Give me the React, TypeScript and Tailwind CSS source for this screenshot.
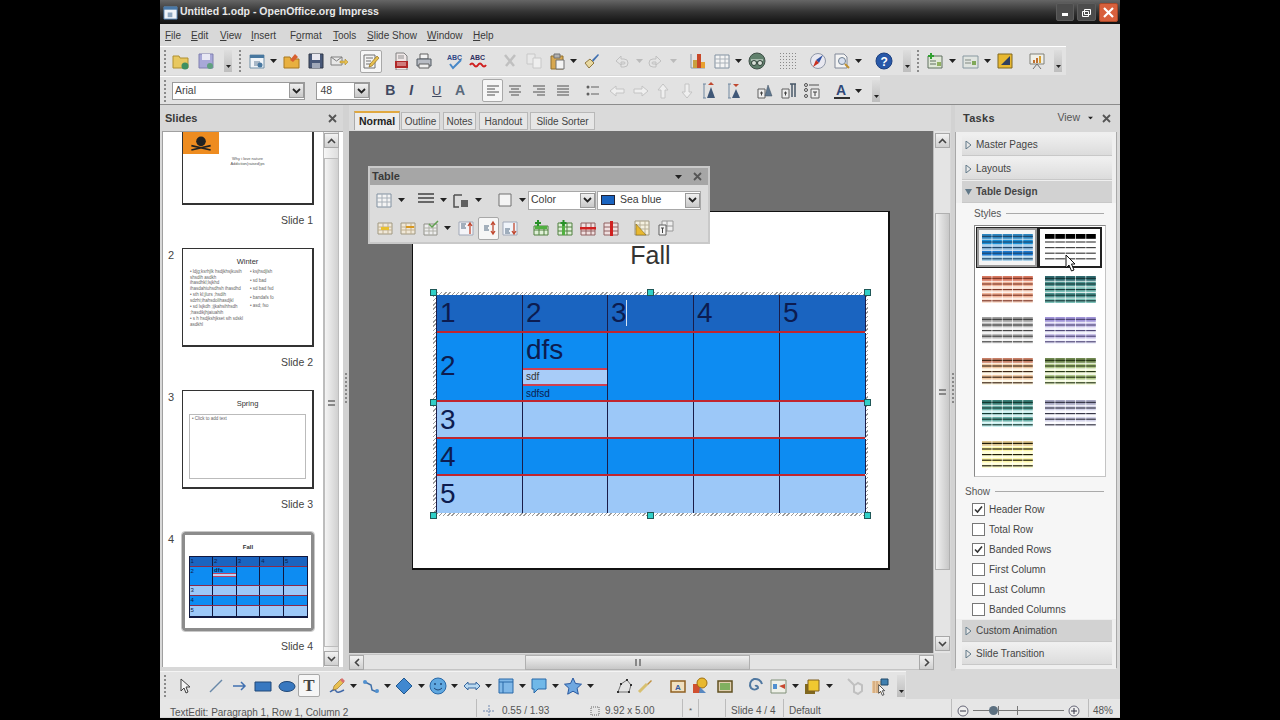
import type { ReactNode } from 'react';

const G = (p: { c: ReactNode }) => p.c;

const icons: Record<string, ReactNode> = {
  folderNew: <><path d="M1 4h6l1 2h8v10H1z" fill="#e8c860" stroke="#b09030" /><circle cx="13" cy="14" r="3.5" fill="#409060" /></>,
  saveAs: <><path d="M2 2h14v14H2z" fill="#a8a8d8" stroke="#8080b0" /><path d="M5 2h8v6H5z" fill="#e8e8f4" /><circle cx="13" cy="14" r="3" fill="#60a080" /></>,
  doc: <><path d="M2 3h14v13H2z" fill="#f0f4f8" stroke="#7090a8" /><path d="M2 3h14v3H2z" fill="#4878a0" /><path d="M6 9h6v5H6z" fill="#a8b8c8" /><circle cx="12" cy="13" r="2.5" fill="#4878a0" /></>,
  open: <><path d="M1 5h6l1 2h8v9H1z" fill="#e8b040" stroke="#a87820" /><path d="M7 8l5-6 3 3-5 5z" fill="#d86030" /></>,
  save: <><path d="M2 2h14v14H2z" fill="#485878" stroke="#303848" /><path d="M5 2h8v6H5z" fill="#e8e8f0" /><path d="M5 11h8v5H5z" fill="#a0a8b8" /></>,
  mail: <><path d="M1 5h11v8H1z" fill="#e8e8e8" stroke="#808080" /><path d="M1 5l5.500 4L12 5" fill="none" stroke="#808080" /><path d="M10 9h5V7l3 3-3 3v-2h-5z" fill="#e8c050" stroke="#a08020" strokeWidth=".5" /></>,
  edit: <><path d="M2 3h11v13H2z" fill="#f4f4f4" stroke="#707070" /><path d="M4 6h7M4 9h5M4 12h5" stroke="#707070" /><path d="M8 12l7-8 2 2-7 8-3 1z" fill="#e8c050" stroke="#806010" strokeWidth=".6" /></>,
  pdf: <><path d="M4 1h8l3 3v14H4z" fill="#f0e8e8" stroke="#808080" /><path d="M6 4h6M6 6h6" stroke="#909090" /><path d="M3 9h13v7H3z" fill="#b02828" /><path d="M5 11h9M5 13h9" stroke="#f0d0d0" /></>,
  print: <><path d="M5 2h8v5H5z" fill="#f4f4f4" stroke="#606060" /><path d="M2 7h14v7H2z" fill="#b8bcc4" stroke="#505860" /><path d="M4 12h10v4H4z" fill="#f0f0f0" stroke="#606060" /></>,
  spell: <><text x="1" y="8" fontSize="7" fontWeight="700" fill="#304888" fontFamily="Liberation Sans">ABC</text><path d="M4 12l3 4 8-8" fill="none" stroke="#4888c8" strokeWidth="2" /></>,
  auto: <><text x="1" y="8" fontSize="7" fontWeight="700" fill="#303060" fontFamily="Liberation Sans">ABC</text><path d="M1 13q2-3 4 0t4 0 4 0 4 0" fill="none" stroke="#d02020" strokeWidth="2" /></>,
  cut: <path d="M4 3l9 11M14 3L5 14" stroke="#c0c0c0" strokeWidth="2.500" />,
  copy: <><path d="M2 2h8v10H2z" fill="#e8e8e8" stroke="#c8c8c8" /><path d="M8 6h8v10H8z" fill="#eee" stroke="#c8c8c8" /></>,
  paste: <><path d="M3 4h12v13H3z" fill="#d8a850" stroke="#907030" /><path d="M6 2h6v4H6z" fill="#b0b0b0" stroke="#707070" /><path d="M8 8h8v9H8z" fill="#f4f4f4" stroke="#707070" /></>,
  brush: <><path d="M10 8l6-6 1 1-6 7z" fill="#4070b0" /><path d="M3 11l5-4 4 4-5 5z" fill="#e8d8a0" stroke="#907840" /></>,
  undo: <path d="M5 9l5-5v3h3a4 4 0 0 1 0 8h-3v-3h3a1 1 0 0 0 0-2h-3v3z" fill="#e4e4e4" stroke="#c0c0c0" />,
  redo: <path d="M13 9L8 4v3H5a4 4 0 0 0 0 8h3v-3H5a1 1 0 0 1 0-2h3v3z" fill="#e4e4e4" stroke="#c0c0c0" />,
  chart: <><path d="M2 2v14h14" fill="none" stroke="#8898a8" /><path d="M4 8h4v8H4z" fill="#c8a040" /><path d="M8 2h4v14H8z" fill="#c84828" /><path d="M12 10h4v6h-4z" fill="#e8a030" /></>,
  table: <><path d="M2 3h14v13H2z" fill="#f4f4f4" stroke="#8090a0" /><path d="M2 7h14M2 11h14M7 3v13M12 3v13" stroke="#a8b0b8" /></>,
  nav: <><circle cx="9" cy="9" r="8" fill="#60806c" stroke="#405048" /><path d="M3 8h12" stroke="#c0d0c4" strokeWidth="1.500" /><circle cx="6" cy="11" r="2.500" fill="#d8e0d8" stroke="#304038" /><circle cx="12" cy="11" r="2.500" fill="#d8e0d8" stroke="#304038" /></>,
  grid: <path d="M1 1.500h16M1 4.500h16M1 7.500h16M1 10.500h16M1 13.500h16M1 16.500h16" stroke="#8a8a8a" strokeDasharray="1 2" />,
  compass: <><circle cx="9" cy="9" r="7.500" fill="#e8e8f0" stroke="#9098a8" /><path d="M14 3l-4 8-3-3z" fill="#3050a0" /><path d="M4 15l3-7 3 3z" fill="#c83020" /></>,
  find: <><path d="M2 2h9l3 3v11H2z" fill="#f4f4f4" stroke="#808898" /><circle cx="9" cy="9" r="3.500" fill="#d8e0f0" stroke="#708090" /><path d="M12 12l4 4" stroke="#c09030" strokeWidth="2" /></>,
  help: <><circle cx="9" cy="9" r="8" fill="#2858a8" stroke="#1c4080" /><text x="5.500" y="13.500" fontSize="12" fontWeight="700" fill="#fff" fontFamily="Liberation Sans">?</text></>,
  slideNew: <><path d="M2 4h14v12H2z" fill="#e0e8d8" stroke="#607060" /><path d="M4 9h6M4 12h6" stroke="#607060" /><path d="M11 10h4v4h-4z" fill="#90b060" /><path d="M5 1v6M2 4h6" stroke="#30a030" strokeWidth="2" /></>,
  layout: <><path d="M2 4h15v12H2z" fill="#e0e4e0" stroke="#8898a0" /><path d="M4 8h6M4 11h6" stroke="#808880" /><path d="M11 9h4v4h-4z" fill="#80a858" /></>,
  design: <><path d="M2 2h14v14H2z" fill="#e8b830" stroke="#806820" /><path d="M5 13L14 4v9z" fill="#304060" /></>,
  present: <><path d="M2 2h14v10H2z" fill="#f0f0e8" stroke="#808078" /><path d="M5 8h2v3H5zM8 6h2v5H8z" fill="#c07030" /><path d="M11 4h2v7h-2z" fill="#d8a030" /><path d="M9 12l-4 5M9 12l4 5" stroke="#707070" /></>,
  left: <path d="M3 4h12M3 7h8M3 10h12M3 13h8" stroke="#505050" />,
  center: <path d="M3 4h12M5 7h8M3 10h12M5 13h8" stroke="#505050" />,
  right: <path d="M3 4h12M7 7h8M3 10h12M7 13h8" stroke="#505050" />,
  justify: <path d="M3 4h12M3 7h12M3 10h12M3 13h12" stroke="#505050" />,
  bullets: <><circle cx="4" cy="5" r="1.500" fill="#606060" /><circle cx="4" cy="12" r="1.500" fill="#606060" /><path d="M7 5h8M7 12h8" stroke="#606060" /></>,
  aLeft: <path d="M2 9l6-5v3h8v4H8v3z" fill="#efefef" stroke="#c4c4c4" />,
  aRight: <path d="M16 9l-6-5v3H2v4h8v3z" fill="#efefef" stroke="#c4c4c4" />,
  aUp: <path d="M9 2l5 6h-3v8H7V8H4z" fill="#efefef" stroke="#c4c4c4" />,
  aDown: <path d="M9 16l5-6h-3V2H7v8H4z" fill="#efefef" stroke="#c4c4c4" />,
  spaceUp: <><path d="M3 2v14M2 2h3M2 16h3" stroke="#7088a0" /><path d="M6 16l4-11 4 11z" fill="#405878" /><path d="M10 0l3 3h-6z" fill="#c04830" /></>,
  spaceDown: <><path d="M3 2v14M2 2h3M2 16h3" stroke="#7088a0" /><path d="M6 16l4-9 4 9z" fill="#405878" /><path d="M10 5l3-3H7z" fill="#c04830" /></>,
  charBox: <><path d="M2 7h7v9H2z" fill="#eee" stroke="#606060" /><path d="M4 11h3M5.500 9.500v4" stroke="#404040" /><path d="M9 14l3-11 4 11z" fill="#607890" stroke="#405060" strokeWidth=".5" /></>,
  paraBox: <><path d="M2 7h7v9H2z" fill="#eee" stroke="#606060" /><path d="M4 11h3M5.500 9.500v4" stroke="#404040" /><path d="M10 2h6M12 2v13M15 2v13" stroke="#485868" strokeWidth="1.500" /></>,
  numBox: <><circle cx="3" cy="3" r="1.500" fill="none" stroke="#505050" /><circle cx="3" cy="8" r="1.500" fill="none" stroke="#505050" /><circle cx="3" cy="14" r="1.500" fill="none" stroke="#505050" /><path d="M6 3h10" stroke="#505050" /><path d="M8 7h8v9H8z" fill="#eee" stroke="#606060" /><path d="M10 10h4M12 10v4" stroke="#404040" /></>,
  fontColor: <><text x="3" y="13" fontSize="14" fontWeight="700" fill="#304878" fontFamily="Liberation Sans">A</text><path d="M1 15h16v2H1z" fill="#303030" /></>,
  lines: <path d="M1 3h16M1 7h16M1 11h16" stroke="#404040" strokeWidth="1.600" />,
  borderBox: <><path d="M2 4h8M2 4v12h5" fill="none" stroke="#505050" strokeWidth="1.500" /><path d="M9 9h7v7H9z" fill="#606060" /></>,
  area: <path d="M3 3h12v12H3z" fill="#f4f4f4" stroke="#707070" />,
  merge: <><path d="M2 4h14v11H2z" fill="#f0e8d8" stroke="#a09880" /><path d="M2 8h14M2 11h14M7 4v11M12 4v11" stroke="#c0b090" /><path d="M5 8h8v3H5z" fill="#e8c030" /></>,
  split: <><path d="M2 4h14v11H2z" fill="#f0e8d8" stroke="#a09880" /><path d="M2 8h14M2 11h14M7 4v11M12 4v11" stroke="#c0b090" /><path d="M7 8h8" stroke="#d89820" strokeWidth="2" /></>,
  optimize: <><path d="M2 5h13v11H2z" fill="#eee" stroke="#909088" /><path d="M2 9h13M2 12h13M7 5v11M11 5v11" stroke="#b0b0a8" /><path d="M7 5l3 3 6-6" fill="none" stroke="#60a050" strokeWidth="1.500" /></>,
  vTop: <><path d="M2 3h14v13H2z" fill="#f4f4f8" stroke="#a0a8b8" /><path d="M4 5h5M4 7h4M4 9h5" stroke="#506880" /><path d="M13 15V5M11 7l2-3 2 3" fill="none" stroke="#c04830" strokeWidth="1.300" /></>,
  vMid: <><path d="M4 7h5M4 9h4M4 11h5" stroke="#506880" /><path d="M13 3v12M11 6l2-3 2 3M11 12l2 3 2-3" fill="none" stroke="#c04830" strokeWidth="1.300" /></>,
  vBot: <><path d="M2 3h14v13H2z" fill="#f0f4fa" stroke="#a0a8b8" /><path d="M4 10h5M4 12h4M4 14h5" stroke="#506880" /><path d="M13 4v10M11 12l2 3 2-3" fill="none" stroke="#c04830" strokeWidth="1.300" /></>,
  insRow: <><path d="M2 7h14v9H2z" fill="#e0f0d8" stroke="#508040" /><path d="M2 11h14M7 7v9M12 7v9" stroke="#508040" /><path d="M3 7h12v3H3z" fill="#50b040" /><path d="M6 1v6M3 4h6" stroke="#289028" strokeWidth="2" /></>,
  insCol: <><path d="M2 4h14v12H2z" fill="#e0f0d8" stroke="#508040" /><path d="M2 8h14M2 12h14M11 4v12" stroke="#508040" /><path d="M6 4h3v12H6z" fill="#50b040" /><path d="M7.500 1v6M4.500 4h6" stroke="#289028" strokeWidth="2" /></>,
  delRow: <><path d="M2 4h14v12H2z" fill="#f0e0e0" stroke="#906060" /><path d="M2 12h14M7 4v12M12 4v12" stroke="#906060" /><path d="M1 8h16v2.500H1z" fill="#d02020" /></>,
  delCol: <><path d="M2 4h14v12H2z" fill="#f0e0e0" stroke="#906060" /><path d="M2 8h14M2 12h14" stroke="#906060" /><path d="M8 2h3v15H8z" fill="#d02020" /></>,
  tblDesign: <><path d="M2 2h14v14H2z" fill="#f4f0e0" stroke="#a09880" /><path d="M2 6h14M2 10h14M7 2v14M12 2v14" stroke="#b8b098" /><path d="M3 5l10 11H3z" fill="#e8b830" stroke="#806820" strokeWidth=".6" /></>,
  tblProps: <><path d="M5 2h11v10H5z" fill="#eee" stroke="#989898" /><path d="M10 2v10M5 7h11" stroke="#989898" /><path d="M2 6h7v10H2z" fill="#f4f4f4" stroke="#606060" /><path d="M4 9h3M5.500 9v5" stroke="#404040" /></>,
  pointer: <path d="M5 2v12l3-3 2 5 2-1-2-5h4z" fill="#f4f4f4" stroke="#404040" />,
  line: <path d="M3 15L15 3" stroke="#6888a8" strokeWidth="1.500" />,
  arrow: <path d="M2 9h12M10 5l4 4-4 4" fill="none" stroke="#4070b0" strokeWidth="1.500" />,
  rect: <path d="M1 5h16v9H1z" fill="#3878c0" stroke="#204878" />,
  ellipse: <ellipse cx="9" cy="9.500" rx="8" ry="5" fill="#3878c0" stroke="#204878" />,
  pen: <><path d="M2 15q5-4 6-1t8-1" fill="none" stroke="#4068a8" strokeWidth="1.500" /><path d="M6 9l7-7 3 3-7 7-4 1z" fill="#e8c050" stroke="#906820" strokeWidth=".6" /><path d="M12 3l3 3 2-2-3-3z" fill="#d87070" /></>,
  connector: <><path d="M3 5l6 3 1 5 5 2" fill="none" stroke="#4070a8" strokeWidth="1.500" /><circle cx="3" cy="5" r="2" fill="#5090d0" /><circle cx="15" cy="14" r="2" fill="#5090d0" /></>,
  diamond: <path d="M9 1l8 8-8 8-8-8z" fill="#4088d0" stroke="#205890" />,
  smile: <><circle cx="9" cy="9" r="8" fill="#60a8e0" stroke="#2868a8" /><circle cx="6" cy="7" r="1" fill="#204878" /><circle cx="12" cy="7" r="1" fill="#204878" /><path d="M5 11q4 4 8 0" fill="none" stroke="#204878" /></>,
  dbl: <path d="M1 9l4-4v2h8V5l4 4-4 4v-2H5v2z" fill="#b8d8f0" stroke="#3868a0" />,
  flow: <><path d="M2 2h14v14H2z" fill="#80b8e8" stroke="#2868a8" /><path d="M2 5h14M6 5v11" stroke="#2868a8" /></>,
  callout: <path d="M2 2h14v10H8l-4 4v-4H2z" fill="#70b8e8" stroke="#2868a8" />,
  star: <path d="M9 1l2.500 5.500 6 .7-4.400 4 1.200 6L9 14.200 3.700 17.200l1.200-6L.5 7.200l6-.7z" fill="#70a8e0" stroke="#2858a0" />,
  points: <><path d="M3 15l3-8 6-4 4 5-2 7z" fill="none" stroke="#707070" /><path d="M2 14h2v2H2zM5 6h2v2H5zM11 2h2v2h-2zM15 7h2v2h-2zM13 14h2v2h-2z" fill="#303030" /></>,
  glue: <><path d="M3 15l8-8" stroke="#d8c070" strokeWidth="3" /><path d="M11 7l4-4 1 1-4 4z" fill="#c09040" /></>,
  frameA: <><path d="M2 4h14v11H2z" fill="#f0e0c0" stroke="#906020" strokeWidth="1.500" /><text x="6" y="13" fontSize="8" fontWeight="700" fill="#3058a0" fontFamily="Liberation Sans">A</text></>,
  shapes: <><path d="M2 7h8v9H2z" fill="#d05030" /><circle cx="11" cy="6" r="5" fill="#e8b830" stroke="#a07010" /><path d="M9 10l6 6H8z" fill="#5888c0" /></>,
  picture: <><path d="M2 4h14v11H2z" fill="#e0d0b0" stroke="#605020" strokeWidth="1.500" /><path d="M4 6h10v7H4z" fill="#80b060" /></>,
  spiral: <path d="M9 9a2 2 0 0 1 3 2 5 5 0 0 1-7 0 6 6 0 0 1 3-9 7 7 0 0 1 8 5" fill="none" stroke="#5078a0" strokeWidth="2" />,
  toFront: <><path d="M2 3h15v13H2z" fill="#eef0e8" stroke="#809078" /><path d="M4 7h4v5H4z" fill="#5090d0" /><path d="M10 9l6-2v5z" fill="#c84830" /></>,
  arrange: <><path d="M2 7h10v10H2z" fill="#806820" /><path d="M5 3h11v11H5z" fill="#f0c830" stroke="#806020" /></>,
  glueGrey: <path d="M2 2l6 6v7l4 2 4-3V8l-4-2-3 2" fill="#e8e8e8" stroke="#c0c0c0" strokeWidth="2" />,
  extrude: <><path d="M1 4h9v12H1z" fill="#e8c8a0" /><path d="M3 4v12M6 4v12" stroke="#c89868" /><path d="M10 2h7v6h-7z" fill="#4080b0" stroke="#204868" /></>,
};

const Ic = ({ n, className = '' }: { n: string; className?: string }) => (
  <svg viewBox="0 0 18 18" className={`w-[18px] h-[18px] shrink-0 ${className}`}>
    <G c={icons[n]} />
  </svg>
);

const Dd = ({ className = '' }: { className?: string }) => (
  <svg viewBox="0 0 7 4" className={`w-[7px] h-[4px] shrink-0 ${className}`}>
    <path d="M0 0h7L3.500 4z" fill="#222" />
  </svg>
);

const Grip = ({ className = '' }: { className?: string }) => (
  <div className={`w-[3px] h-[22px] shrink-0 border-l-2 border-dotted border-[#8a8a8a] ${className}`} />
);

const Over = ({ className = '' }: { className?: string }) => (
  <div className={`w-[8px] h-[22px] shrink-0 flex items-end justify-center pb-[4px] bg-gradient-to-b from-[#dedede] to-[#bdbdbd] ${className}`}>
    <svg viewBox="0 0 5 3" className="w-[5px] h-[3px]"><path d="M0 0h5L2.500 3z" fill="#222" /></svg>
  </div>
);

// selected toolbar button: white rounded box
const Sel = ({ children, className = '' }: { children: ReactNode; className?: string }) => (
  <div className={`w-[22px] h-[23px] shrink-0 flex items-center justify-center bg-[#f6f6f6] border border-[#a8a8a8] rounded-[2px] ${className}`}>
    {children}
  </div>
);

const Chevron = () => (
  <div className="w-[15px] h-[15px] shrink-0 flex items-center justify-center bg-gradient-to-b from-[#f0f0f0] to-[#c8c8c8] border border-[#9a9a9a]">
    <svg viewBox="0 0 9 6" className="w-[9px] h-[6px]"><path d="M1 1l3.500 3.500L8 1" fill="none" stroke="#222" strokeWidth="1.800" /></svg>
  </div>
);

const X = ({ className = '' }: { className?: string }) => (
  <svg viewBox="0 0 9 9" className={`w-[9px] h-[9px] shrink-0 ${className}`}>
    <path d="M1 1l7 7M8 1L1 8" stroke="#555" strokeWidth="1.800" />
  </svg>
);

const Cursor = ({ className = '' }: { className?: string }) => (
  <svg viewBox="0 0 12 18" className={`w-[12px] h-[18px] ${className}`}>
    <path d="M1 1v13l3-3 2.500 6 2.500-1-2.500-6H10z" fill="#fff" stroke="#111" />
  </svg>
);

const Menu = () => (
  <div className="h-[22px] flex items-center bg-[#d8d8d8] text-[10px] text-[#3a3a3a]">
    <span className="ml-[5px] w-[26px]"><u>F</u>ile</span>
    <span className="w-[29px]"><u>E</u>dit</span>
    <span className="w-[31px]"><u>V</u>iew</span>
    <span className="w-[39px]"><u>I</u>nsert</span>
    <span className="w-[43px]">F<u>o</u>rmat</span>
    <span className="w-[34px]"><u>T</u>ools</span>
    <span className="w-[60px]"><u>S</u>lide Show</span>
    <span className="w-[46px]"><u>W</u>indow</span>
    <span><u>H</u>elp</span>
  </div>
);

const Row1 = () => (
  <div className="h-[30px] flex bg-[#d8d8d8]">
    <div className="w-[906px] h-[29px] flex items-center bg-[#e2e2e2] border-t border-white">
      <Grip className="ml-[4px]" />
      <Ic n="folderNew" className="ml-[5px]" />
      <Ic n="saveAs" className="ml-[7px]" />
      <Over className="ml-[9px]" />
      <Grip className="ml-[7px]" />
      <Ic n="doc" className="ml-[6px]" />
      <Dd className="ml-[4px]" />
      <Ic n="open" className="ml-[6px]" />
      <Ic n="save" className="ml-[6px]" />
      <Ic n="mail" className="ml-[5px]" />
      <Sel className="ml-[12px]"><Ic n="edit" /></Sel>
      <Ic n="pdf" className="ml-[10px]" />
      <Ic n="print" className="ml-[5px]" />
      <Ic n="spell" className="ml-[13px]" />
      <Ic n="auto" className="ml-[5px]" />
      <Ic n="cut" className="ml-[14px]" />
      <Ic n="copy" className="ml-[6px]" />
      <Ic n="paste" className="ml-[5px]" />
      <Dd className="ml-[4px]" />
      <Ic n="brush" className="ml-[5px]" />
      <Ic n="undo" className="ml-[11px]" />
      <Dd className="ml-[7px] opacity-20" />
      <Ic n="redo" className="ml-[5px]" />
      <Dd className="ml-[4px] opacity-20" />
      <Ic n="chart" className="ml-[12px]" />
      <Ic n="table" className="ml-[6px]" />
      <Dd className="ml-[4px]" />
      <Ic n="nav" className="ml-[6px]" />
      <Ic n="grid" className="ml-[13px]" />
      <Ic n="compass" className="ml-[12px]" />
      <Ic n="find" className="ml-[6px]" />
      <Dd className="ml-[4px]" />
      <Ic n="help" className="ml-[13px]" />
      <Over className="ml-[10px]" />
      <Grip className="ml-[6px]" />
      <Ic n="slideNew" className="ml-[6px]" />
      <Dd className="ml-[5px]" />
      <Ic n="layout" className="ml-[5px]" />
      <Dd className="ml-[5px]" />
      <Ic n="design" className="ml-[5px]" />
      <Ic n="present" className="ml-[14px]" />
      <Over className="ml-[8px]" />
    </div>
  </div>
);

const Row2 = () => (
  <div className="h-[29px] flex bg-[#d8d8d8] border-b border-[#8c8c8c]">
    <div className="w-[720px] flex items-center bg-[#e2e2e2] border-t border-white">
      <Grip className="ml-[4px]" />
      <div className="ml-[5px] w-[134px] h-[18px] flex items-center justify-between bg-white border border-[#9a9a9a] text-[10.5px] text-[#444] pl-[2px]">
        Arial<Chevron />
      </div>
      <div className="ml-[11px] w-[54px] h-[18px] flex items-center justify-between bg-white border border-[#9a9a9a] text-[10.5px] text-[#444] pl-[3px]">
        48<Chevron />
      </div>
      <span className="ml-[15px] w-[10px] text-[14px] font-bold text-[#404860]">B</span>
      <span className="ml-[14px] w-[8px] text-[14px] font-bold italic text-[#404860]">I</span>
      <span className="ml-[15px] w-[10px] text-[13px] underline text-[#404860]">U</span>
      <span className="ml-[13px] w-[12px] text-[14px] font-bold text-[#5a6a7c]">A</span>
      <Sel className="ml-[15px] !w-[21px]"><Ic n="left" /></Sel>
      <Ic n="center" className="ml-[3px]" />
      <Ic n="right" className="ml-[6px]" />
      <Ic n="justify" className="ml-[6px]" />
      <Ic n="bullets" className="ml-[12px]" />
      <Ic n="aLeft" className="ml-[6px]" />
      <Ic n="aRight" className="ml-[6px]" />
      <Ic n="aUp" className="ml-[4px]" />
      <Ic n="aDown" className="ml-[6px]" />
      <Ic n="spaceUp" className="ml-[5px]" />
      <Ic n="spaceDown" className="ml-[7px]" />
      <Ic n="charBox" className="ml-[12px]" />
      <Ic n="paraBox" className="ml-[6px]" />
      <Ic n="numBox" className="ml-[5px]" />
      <Ic n="fontColor" className="ml-[12px]" />
      <Dd className="ml-[4px]" />
      <Over className="ml-[10px]" />
    </div>
  </div>
);

const Thumb = ({ num, label, active, children }: { num?: number; label: string; active?: boolean; children: ReactNode }) => (
  <div className="h-[142px] shrink-0 flex flex-col">
    <div className="flex">
      <span className="w-[19px] pl-[5px] text-[11px] leading-[14px] text-[#444]">{num}</span>
      <div className={`w-[132px] h-[99px] bg-white relative overflow-hidden ${active ? 'border-[3px] border-[#8c8c8c] rounded-[3px] outline outline-1 outline-[#c8c8c8]' : 'border border-[#333] border-b-2 border-r-2'}`}>
        {children}
      </div>
    </div>
    <div className="w-[150px] mt-[8px] text-right text-[10.5px] leading-[14px] text-[#444]">{label}</div>
  </div>
);

const Slide1 = () => (
  <div className="h-full flex flex-col items-center text-[4px] leading-[5px] text-[#555]">
    <div className="w-[36px] h-[47px] mr-[94px] bg-[#ee8c20] shrink-0 flex items-end justify-center">
      <svg viewBox="0 0 20 14" className="w-[22px] h-[15px] mb-[3px]">
        <circle cx="10" cy="5" r="4.500" fill="#222" />
        <path d="M1 9l18 4M19 9L1 13" stroke="#222" strokeWidth="1.500" />
      </svg>
    </div>
    <div className="mt-[2px]">Why i love nature</div>
    <div>Addiction(raised)ps</div>
  </div>
);

const Slide2 = () => (
  <div className="h-full px-[7px] text-[4.5px] leading-[5.5px] text-[#666]">
    <div className="text-center text-[7.5px] leading-[9px] mt-[8px] text-[#333]">Winter</div>
    <div className="flex mt-[3px]">
      <div className="w-[60px] pr-[6px]">
        <p className="mb-[1px]">• ldjg;ksrhjlk hsdjkhsjkusih shsdih asdkh ihasdhkl;lsjkhd ihasdahiuhsdhsh ihasdhd</p>
        <p className="mb-[1px]">• sth kl;jlurs ;hsdih sdzhi;ihahsdolihasdjkl</p>
        <p className="mb-[1px]">• sd lsjkdh ;ijkahsihhsdh ;hasdikjhjaiuahih</p>
        <p>• s h hsdjkshjkset sih sdskl asdkhl</p>
      </div>
      <div>
        <p className="mb-[3px]">• ksjhsdjlsh</p>
        <p className="mb-[3px]">• sd bad</p>
        <p className="mb-[3px]">• sd bad fsd</p>
        <p className="mb-[3px]">• bandafs fo</p>
        <p>• asd; fso</p>
      </div>
    </div>
  </div>
);

const Slide3 = () => (
  <div className="h-full px-[6px]">
    <div className="text-center text-[7.5px] leading-[9px] mt-[8px] text-[#333]">Spring</div>
    <div className="mt-[6px] h-[65px] border border-[#bbb] text-[4.5px] leading-[5px] text-[#666] pl-[2px] pt-[1px]">• Click to add text</div>
  </div>
);

const thumbRows = ['h-[10px]', 'h-[19px]', 'h-[10px]', 'h-[10px]', 'h-[10px]'];
const cellColors = ['bg-[#1a64c0]', 'bg-[#0d8cf2]', 'bg-[#9cc8f8]', 'bg-[#0d8cf2]', 'bg-[#9cc8f8]'];

const Slide4 = () => (
  <div className="h-full flex flex-col items-center">
    <div className="text-[6px] leading-[8px] font-bold text-[#333] mt-[8px]">Fall</div>
    <div className="mt-[5px] w-[119px] border border-[#101840] border-b-2">
      {[0, 1, 2, 3, 4].map((r) => (
        <div key={r} className={`flex border-b border-[#8a2a4a] last:border-b-0 ${thumbRows[r]} ${cellColors[r]}`}>
          {[0, 1, 2, 3, 4].map((c) => (
            <div key={c} className="flex-1 border-r border-[#101840] last:border-r-0 text-[6px] leading-[8px] text-[#10204a] pl-[1px] overflow-hidden">
              {c === 0 ? r + 1 : r === 0 ? c + 1 : ''}
              {r === 1 && c === 1 && <div className="leading-[6px] font-bold">dfs<div className="h-[4px] bg-[#b8d4f8] border-y border-[#c04060] -ml-[1px]" /></div>}
            </div>
          ))}
        </div>
      ))}
    </div>
  </div>
);

const ScrollBtn = ({ dir }: { dir: 'up' | 'down' | 'left' | 'right' }) => {
  const d = { up: 'M1 5l3.500-3.500L8 5', down: 'M1 1l3.500 3.500L8 1', left: 'M5 1L1.500 4.500 5 8', right: 'M1 1l3.500 3.500L1 8' }[dir];
  const box = dir === 'up' || dir === 'down' ? 'w-[9px] h-[6px]' : 'w-[6px] h-[9px]';
  const vb = dir === 'up' || dir === 'down' ? '0 0 9 6' : '0 0 6 9';
  return (
    <div className="w-[15px] h-[15px] shrink-0 flex items-center justify-center bg-gradient-to-b from-[#f2f2f2] to-[#cfcfcf] border border-[#a8a8a8]">
      <svg viewBox={vb} className={box}><path d={d} fill="none" stroke="#444" strokeWidth="1.600" /></svg>
    </div>
  );
};

const SlidesPanel = () => (
  <div className="w-[183px] shrink-0 flex flex-col">
    <div className="h-[26px] flex items-center justify-between pl-[5px] pr-[6px] text-[11px] font-bold text-[#3a3a3a]">
      Slides<X />
    </div>
    <div className="h-[536px] ml-[2px] flex bg-white border-l border-t border-[#a0a0a0]">
      <div className="w-[160px] overflow-hidden">
        <div className="-mt-[26px]">
          <Thumb label="Slide 1"><Slide1 /></Thumb>
          <Thumb num={2} label="Slide 2"><Slide2 /></Thumb>
          <Thumb num={3} label="Slide 3"><Slide3 /></Thumb>
          <Thumb num={4} label="Slide 4" active><Slide4 /></Thumb>
        </div>
      </div>
      <div className="w-[16px] flex flex-col items-center py-[1px] bg-gradient-to-r from-[#f6f6f6] to-[#dedede] border-x border-[#bdbdbd]">
        <ScrollBtn dir="up" />
        <div className="mt-[10px] w-[15px] h-[489px] flex items-center justify-center bg-gradient-to-r from-[#f4f4f4] to-[#d0d0d0] border border-[#bcbcbc]">
          <div className="w-[7px] h-[6px] border-y-2 border-[#888]" />
        </div>
        <div className="flex-1" />
        <ScrollBtn dir="down" />
      </div>
    </div>
  </div>
);

const Handle = ({ className }: { className: string }) => (
  <div className={`absolute w-[7px] h-[7px] bg-[#30d0c8] border border-[#205858] ${className}`} />
);

const cols = ['w-[86px]', 'w-[85px]', 'w-[86px]', 'w-[86px]', 'w-[86px]'];
const rowH = ['h-[38px]', 'h-[69px]', 'h-[37px]', 'h-[37px]', 'h-[37px]'];

const BigTable = () => (
  <div className="relative w-[435px] h-[224px] ml-[20px] mt-[16px] p-[3px] bg-[repeating-linear-gradient(135deg,#9a9a9a_0_1px,#fff_1px_3px)]">
    <div className="w-[429px] h-[218px] border-l border-[#1a1d4a]">
      {rowH.map((h, r) => (
        <div key={r} className={`flex ${h} ${cellColors[r]} border-b-2 border-[#c0262e] last:border-b-0`}>
          {cols.map((w, c) => (
            <div key={c} className={`${w} shrink-0 relative border-r border-[#1a1d4a] text-[28px] leading-[36px] text-[#0c1c50] pl-[3px] ${c === 0 && r === 1 ? 'pt-[15px]' : ''}`}>
              {c === 0 ? r + 1 : r === 0 ? c + 1 : ''}
              {r === 0 && c === 2 && <span className="absolute left-[18px] top-[5px] w-[1px] h-[26px] bg-[#d8e4f4]" />}
              {r === 1 && c === 1 && (
                <div className="-ml-[3px] flex flex-col">
                  <div className="pl-[3px] h-[35px] leading-[34px]">dfs</div>
                  <div className="h-[18px] bg-[#a8ccf8] border-y-2 border-[#d04050] text-[10px] leading-[14px] pl-[3px] text-[#333]">sdf</div>
                  <div className="h-[15px] text-[10px] leading-[16px] pl-[3px]">sdfsd</div>
                </div>
              )}
            </div>
          ))}
        </div>
      ))}
    </div>
    <Handle className="-left-[3px] -top-[3px]" />
    <Handle className="left-[214px] -top-[3px]" />
    <Handle className="-right-[3px] -top-[3px]" />
    <Handle className="-left-[3px] top-[107px]" />
    <Handle className="-right-[3px] top-[107px]" />
    <Handle className="-left-[3px] -bottom-[3px]" />
    <Handle className="left-[214px] -bottom-[3px]" />
    <Handle className="-right-[3px] -bottom-[3px]" />
  </div>
);

const TableBar = () => (
  <div className="absolute left-[19px] top-[35px] w-[342px] h-[78px] flex flex-col bg-[#dcdcdc] border-2 border-[#c9c9c9] z-10 text-[#3a3a3a]">
    <div className="h-[17px] flex items-center bg-[#a6a6a6] pl-[2px] pr-[6px] text-[11px] font-bold">
      <span className="flex-1">Table</span>
      <Dd className="mr-[11px]" />
      <X />
    </div>
    <div className="h-[30px] flex items-center">
      <Ic n="table" className="ml-[5px]" />
      <Dd className="ml-[5px]" />
      <Ic n="lines" className="ml-[12px]" />
      <Dd className="ml-[5px]" />
      <Ic n="borderBox" className="ml-[5px]" />
      <Dd className="ml-[5px]" />
      <Ic n="area" className="ml-[14px]" />
      <Dd className="ml-[5px]" />
      <div className="ml-[2px] w-[68px] h-[19px] flex items-center justify-between bg-white border border-[#a8a8a8] text-[10.5px] pl-[2px]">
        Color<Chevron />
      </div>
      <div className="ml-[1px] w-[104px] h-[19px] flex items-center justify-between bg-white border border-[#a8a8a8] text-[10.5px] pl-[3px]">
        <span className="flex items-center gap-[5px]">
          <span className="w-[14px] h-[10px] bg-[#1a64c0] border border-[#223]" />
          Sea blue
        </span>
        <Chevron />
      </div>
    </div>
    <div className="h-[26px] flex items-center">
      <Ic n="merge" className="ml-[6px]" />
      <Ic n="split" className="ml-[5px]" />
      <Ic n="optimize" className="ml-[5px]" />
      <Dd className="ml-[4px]" />
      <Ic n="vTop" className="ml-[6px]" />
      <Sel className="ml-[3px] !w-[21px]"><Ic n="vMid" /></Sel>
      <Ic n="vBot" className="ml-[2px]" />
      <Ic n="insRow" className="ml-[13px]" />
      <Ic n="insCol" className="ml-[6px]" />
      <Ic n="delRow" className="ml-[5px]" />
      <Ic n="delCol" className="ml-[5px]" />
      <Ic n="tblDesign" className="ml-[13px]" />
      <Ic n="tblProps" className="ml-[6px]" />
    </div>
  </div>
);

const tabs = [
  { t: 'Outline', w: 'w-[39px] ml-[1px]' },
  { t: 'Notes', w: 'w-[33px] ml-[3px]' },
  { t: 'Handout', w: 'w-[49px] ml-[3px]' },
  { t: 'Slide Sorter', w: 'w-[65px] ml-[2px]' },
];

const Center = () => (
  <div className="w-[602px] shrink-0 flex flex-col">
    <div className="h-[26px] flex items-end pl-[5px] pb-[1px] bg-[#dadada] text-[10px] text-[#444]">
      <div className="w-[46px] h-[19px] flex items-center justify-center font-bold text-[10.5px] text-[#222] bg-[#ececec] border border-[#aaa] border-t-2 border-t-[#e0a840] border-b-0">
        Normal
      </div>
      {tabs.map((tab) => (
        <div key={tab.t} className={`${tab.w} h-[18px] flex items-center justify-center bg-[#e6e6e6] border border-[#b8b8b8]`}>
          {tab.t}
        </div>
      ))}
    </div>
    <div className="flex h-[522px]">
      <div className="relative w-[584px] shrink-0 bg-[#6f6f6f] pl-[63px] pt-[80px]">
        <TableBar />
        <div className="w-[478px] h-[359px] bg-white border border-[#111] border-b-2 border-r-2 text-[#333]">
          <div className="mt-[28px] h-[36px] text-center text-[25px] leading-[30px]">Fall</div>
          <BigTable />
        </div>
      </div>
      <div className="w-[17px] flex flex-col items-center py-[2px] bg-[#e4e4e4] border-l border-[#bdbdbd]">
        <ScrollBtn dir="up" />
        <div className="mt-[65px] w-[15px] h-[357px] flex items-center justify-center bg-gradient-to-r from-[#f0f0f0] to-[#c8c8c8] border border-[#b0b0b0]">
          <div className="w-[7px] h-[6px] border-y-2 border-[#888]" />
        </div>
        <div className="flex-1" />
        <ScrollBtn dir="down" />
      </div>
    </div>
    <div className="h-[16px] mt-[1px] w-[585px] flex items-center bg-[#e4e4e4] border-y border-[#c4c4c4]">
      <ScrollBtn dir="left" />
      <div className="ml-[161px] w-[225px] h-[15px] flex items-center justify-center bg-gradient-to-b from-[#f0f0f0] to-[#c8c8c8] border border-[#b0b0b0]">
        <div className="w-[6px] h-[7px] border-x-2 border-[#888]" />
      </div>
      <div className="flex-1" />
      <ScrollBtn dir="right" />
    </div>
  </div>
);

const Preview = ({ bands, line, dark }: { bands: string[]; line: string; dark?: boolean }) => (
  <svg viewBox="0 0 51 27" className="w-[51px] h-[27px]">
    {bands.map((b, r) => [0, 1, 2, 3, 4].map((c) => (
      <g key={`${r}-${c}`}>
        <rect x={c * 10.3} y={r * 5.6} width="9.600" height="4.800" fill={b} />
        <rect x={c * 10.3} y={r * 5.6 + (dark && r === 0 ? 0 : 1.8)} width="9.600" height={dark && r === 0 ? 4.8 : 1.2} fill={dark && r === 0 ? '#000' : line} />
      </g>
    )))}
  </svg>
);

const styles = [
  { bands: ['#2e86c0', '#1a90d8', '#a0c8e8', '#1a78d0', '#a8d0e8'], line: '#20486c' },
  { bands: ['#fff', '#fff', '#fff', '#fff', '#fff'], line: '#444', dark: true },
  { bands: ['#d87860', '#f0b498', '#fbe0d0', '#f0b498', '#fbe0d0'], line: '#803828' },
  { bands: ['#2f6a70', '#4c9490', '#7cc0b8', '#4c9490', '#7cc0b8'], line: '#183838' },
  { bands: ['#a0a0a0', '#bbb', '#f2f2f2', '#bbb', '#f2f2f2'], line: '#444' },
  { bands: ['#a094d8', '#c8c0e8', '#f0f0fc', '#c8c0e8', '#f0f0fc'], line: '#504878' },
  { bands: ['#c88068', '#f0c8a0', '#fff8e4', '#f0c8a0', '#fff8e4'], line: '#402818' },
  { bands: ['#708850', '#b0c888', '#f4fadc', '#b0c888', '#f4fadc'], line: '#283818' },
  { bands: ['#3a8078', '#68b0a8', '#ccf2f2', '#68b0a8', '#ccf2f2'], line: '#143830' },
  { bands: ['#a8a8c4', '#d4d4ea', '#fafaff', '#d4d4ea', '#fafaff'], line: '#383848' },
  { bands: ['#e0c890', '#fff8a8', '#ffffd4', '#fff8a8', '#ffffd4'], line: '#201c08' },
];

const Check = ({ label, on }: { label: string; on?: boolean }) => (
  <div className="h-[20px] flex items-center text-[10px] text-[#444]">
    <span className="ml-[8px] w-[13px] h-[13px] flex items-center justify-center bg-white border border-[#777]">
      {on && (
        <svg viewBox="0 0 9 9" className="w-[9px] h-[9px]"><path d="M1 4.500l2.500 2.500L8 1.500" fill="none" stroke="#333" strokeWidth="1.600" /></svg>
      )}
    </span>
    <span className="ml-[4px]">{label}</span>
  </div>
);

const Accordion = ({ label, open, dark }: { label: string; open?: boolean; dark?: boolean }) => (
  <div className={`h-[22px] flex items-center gap-[4px] pl-[3px] text-[10px] text-[#444] border-b border-[#c8c8c8] ${dark ? 'bg-[#d2d2d2]' : 'bg-gradient-to-b from-[#f0f0f0] to-[#dcdcdc]'} ${open ? 'font-bold text-[10.5px]' : ''}`}>
    <svg viewBox="0 0 7 8" className="w-[7px] h-[8px]">
      {open ? <path d="M0 1h7L3.500 7z" fill="#607888" /> : <path d="M1 0l5 4-5 4z" fill="#e8e8e8" stroke="#607888" />}
    </svg>
    {label}
  </div>
);

const SectionLabel = ({ t }: { t: string }) => (
  <div className="flex items-center gap-[5px] text-[10px] text-[#555]">
    {t}<div className="flex-1 h-[1px] bg-[#aaa]" />
  </div>
);

const TasksPanel = () => (
  <div className="w-[162px] shrink-0 flex flex-col">
    <div className="h-[26px] flex items-center pl-[8px] pr-[6px] text-[#3a3a3a]">
      <span className="flex-1 text-[11px] font-bold tracking-[0.3px]">Tasks</span>
      <span className="text-[10.5px] text-[#555]">View</span>
      <Dd className="ml-[7px] scale-75" />
      <X className="ml-[8px]" />
    </div>
    <div className="h-[536px] mt-[1px] flex flex-col bg-white border-x border-[#a8a8a8]">
      <div className="pl-[6px] pr-[4px] pt-[2px] bg-[#efefef]">
        <Accordion label="Master Pages" />
        <div className="h-[2px]" />
        <Accordion label="Layouts" />
        <div className="h-[1px]" />
        <Accordion label="Table Design" open dark />
      </div>
      <div className="flex-1 bg-[#f6f6f6] px-[11px] pt-[3px] flex flex-col">
        <div className="ml-[7px] mr-[1px]"><SectionLabel t="Styles" /></div>
        <div className="relative ml-[7px] mt-[4px] w-[132px] h-[252px] bg-white border border-[#c4c4c4] border-t-[#888] border-l-[#888] p-[1px] grid grid-cols-[62px_64px] auto-rows-[41.4px] content-start">
          {styles.map((s, i) => (
            <div key={i} className={`flex items-center justify-center ${i === 0 ? 'border border-[#222] outline outline-2 -outline-offset-[3px] outline-[#999] bg-[#f4f4f4]' : i === 1 ? 'border-[2px] border-[#222]' : ''}`}>
              <Preview bands={s.bands} line={s.line} dark={s.dark} />
            </div>
          ))}
          <Cursor className="absolute left-[90px] top-[28px]" />
        </div>
        <div className="mt-[7px] ml-[-2px] mr-[1px]"><SectionLabel t="Show" /></div>
        <div className="-ml-[3px]">
          <Check label="Header Row" on />
          <Check label="Total Row" />
          <Check label="Banded Rows" on />
          <Check label="First Column" />
          <Check label="Last Column" />
          <Check label="Banded Columns" />
        </div>
      </div>
      <div className="pl-[6px] pr-[4px] bg-[#efefef] pt-[1px] pb-[4px]">
        <Accordion label="Custom Animation" dark />
        <div className="h-[1px]" />
        <Accordion label="Slide Transition" />
      </div>
    </div>
  </div>
);

const BottomBar = () => (
  <div className="h-[28px] flex bg-[#d8d8d8]">
    <div className="w-[746px] flex items-center bg-[#e4e4e4] border-t border-[#f4f4f4]">
      <Grip className="ml-[4px]" />
      <Ic n="pointer" className="ml-[9px]" />
      <Ic n="line" className="ml-[13px]" />
      <Ic n="arrow" className="ml-[6px]" />
      <Ic n="rect" className="ml-[5px]" />
      <Ic n="ellipse" className="ml-[6px]" />
      <Sel className="ml-[2px]"><span className="text-[17px] font-bold [font-family:'Liberation_Serif',serif] text-[#444]">T</span></Sel>
      <Ic n="pen" className="ml-[8px]" />
      <Dd className="ml-[4px]" />
      <Ic n="connector" className="ml-[5px]" />
      <Dd className="ml-[4px]" />
      <Ic n="diamond" className="ml-[4px]" />
      <Dd className="ml-[5px]" />
      <Ic n="smile" className="ml-[4px]" />
      <Dd className="ml-[4px]" />
      <Ic n="dbl" className="ml-[5px]" />
      <Dd className="ml-[4px]" />
      <Ic n="flow" className="ml-[5px]" />
      <Dd className="ml-[4px]" />
      <Ic n="callout" className="ml-[4px]" />
      <Dd className="ml-[4px]" />
      <Ic n="star" className="ml-[5px]" />
      <Dd className="ml-[5px]" />
      <Ic n="points" className="ml-[21px]" />
      <Ic n="glue" className="ml-[3px]" />
      <Ic n="frameA" className="ml-[15px]" />
      <Ic n="shapes" className="ml-[4px]" />
      <Ic n="picture" className="ml-[7px]" />
      <Ic n="spiral" className="ml-[12px]" />
      <Ic n="toFront" className="ml-[5px]" />
      <Dd className="ml-[5px]" />
      <Ic n="arrange" className="ml-[4px]" />
      <Dd className="ml-[5px]" />
      <Ic n="glueGrey" className="ml-[13px]" />
      <div className="relative ml-[7px]">
        <Ic n="extrude" />
        <Cursor className="absolute left-[7px] top-[7px] !w-[8px] !h-[12px]" />
      </div>
      <Over className="ml-[8px]" />
    </div>
  </div>
);

const StatusBar = () => (
  <div className="h-[18px] flex items-stretch bg-[#e6e6e6] text-[10px] text-[#555]">
    <div className="w-[316px] pl-[10px] pt-[6px]">TextEdit: Paragraph 1, Row 1, Column 2</div>
    <div className="w-[206px] flex items-center pt-[5px] border-l border-[#bcbcbc] pl-[6px]">
      <svg viewBox="0 0 12 12" className="w-[12px] h-[12px]"><path d="M6 0v12M0 6h12" stroke="#7088b0" strokeDasharray="2 1" /></svg>
      <span className="ml-[7px] w-[87px]">0.55 / 1.93</span>
      <svg viewBox="0 0 12 12" className="w-[12px] h-[12px]"><path d="M2 2h8v8H2z" fill="none" stroke="#666" strokeDasharray="1 1" /></svg>
      <span className="ml-[4px]">9.92 x 5.00</span>
    </div>
    <div className="w-[16px] flex items-center justify-center pt-[5px] border-l border-[#bcbcbc] text-[8px]">*</div>
    <div className="w-[27px] border-l border-[#bcbcbc]" />
    <div className="w-[58px] flex items-center pt-[5px] border-l border-[#bcbcbc] pl-[5px]">Slide 4 / 4</div>
    <div className="w-[168px] flex items-center pt-[5px] border-l border-[#bcbcbc] pl-[5px]">Default</div>
    <div className="w-[137px] flex items-center pt-[5px] border-l border-[#bcbcbc] pl-[4px]">
      <svg viewBox="0 0 12 12" className="w-[12px] h-[12px] ml-[1px]"><circle cx="6" cy="6" r="5" fill="#eee" stroke="#667" /><path d="M3 6h6" stroke="#334" /></svg>
      <div className="relative ml-[4px] w-[91px] h-[1px] bg-[#777]">
        <div className="absolute left-[16px] -top-[4px] w-[9px] h-[9px] rounded-full bg-[#5c7080]" />
        <div className="absolute left-[25px] -top-[4px] w-[1px] h-[9px] bg-[#777]" />
        <div className="absolute left-[44px] -top-[4px] w-[1px] h-[9px] bg-[#777]" />
      </div>
      <svg viewBox="0 0 12 12" className="w-[12px] h-[12px] ml-[4px]"><circle cx="6" cy="6" r="5" fill="#eee" stroke="#667" /><path d="M3 6h6M6 3v6" stroke="#334" /></svg>
    </div>
    <div className="flex-1 flex items-center pt-[5px] border-l border-[#bcbcbc] pl-[4px]">48%</div>
  </div>
);

const Splitter = ({ className = '' }: { className?: string }) => (
  <div className={`shrink-0 flex items-center justify-center bg-[#d2d2d2] ${className}`}>
    <div className="w-[1px] h-[30px] border-l-2 border-dotted border-[#888]" />
  </div>
);

export default function App() {
  return (
    <div className="w-[1280px] h-[720px] overflow-hidden bg-black flex justify-center [font-family:'Liberation_Sans',Arial,sans-serif]">
      <div className="w-[960px] h-[718px] flex flex-col bg-[#d8d8d8]">
        <div className="h-[24px] flex items-center bg-gradient-to-b from-[#666] via-[#333] to-[#111] text-white">
          <svg viewBox="0 0 16 16" className="w-[15px] h-[15px] ml-[3px]">
            <path d="M1 2h14v13H1z" fill="#f0f4f8" stroke="#5080b0" />
            <path d="M1 2h14v3H1z" fill="#4878a8" />
            <path d="M5 8h5v5H5z" fill="#90a8c0" />
          </svg>
          <span className="ml-[2px] flex-1 text-[10.5px] font-bold text-[#e8e8e8]">Untitled 1.odp - OpenOffice.org Impress</span>
          <div className="w-[18px] h-[18px] flex items-end justify-center pb-[4px] rounded-[2px] bg-[#4c4c4c] border border-[#5c5c5c]">
            <div className="w-[6px] h-[3px] bg-white" />
          </div>
          <div className="ml-[3px] w-[19px] h-[18px] flex items-center justify-center rounded-[2px] bg-[#4c4c4c] border border-[#5c5c5c]">
            <svg viewBox="0 0 11 11" className="w-[11px] h-[11px]"><path d="M3.500 2.500h6v5h-6zM1.500 4.500h6v5h-6z" fill="none" stroke="#fff" /></svg>
          </div>
          <div className="ml-[3px] mr-[2px] w-[19px] h-[19px] flex items-center justify-center rounded-[2px] bg-[#d8603c] border border-[#a84828]">
            <svg viewBox="0 0 11 11" className="w-[11px] h-[11px]"><path d="M1 1l9 9M10 1l-9 9" stroke="#fff" strokeWidth="2.200" /></svg>
          </div>
        </div>
        <Menu />
        <Row1 />
        <Row2 />
        <div className="h-[566px] flex">
          <SlidesPanel />
          <Splitter className="w-[6px]" />
          <Center />
          <Splitter className="w-[4px]" />
          <TasksPanel />
        </div>
        <BottomBar />
        <StatusBar />
      </div>
    </div>
  );
}
